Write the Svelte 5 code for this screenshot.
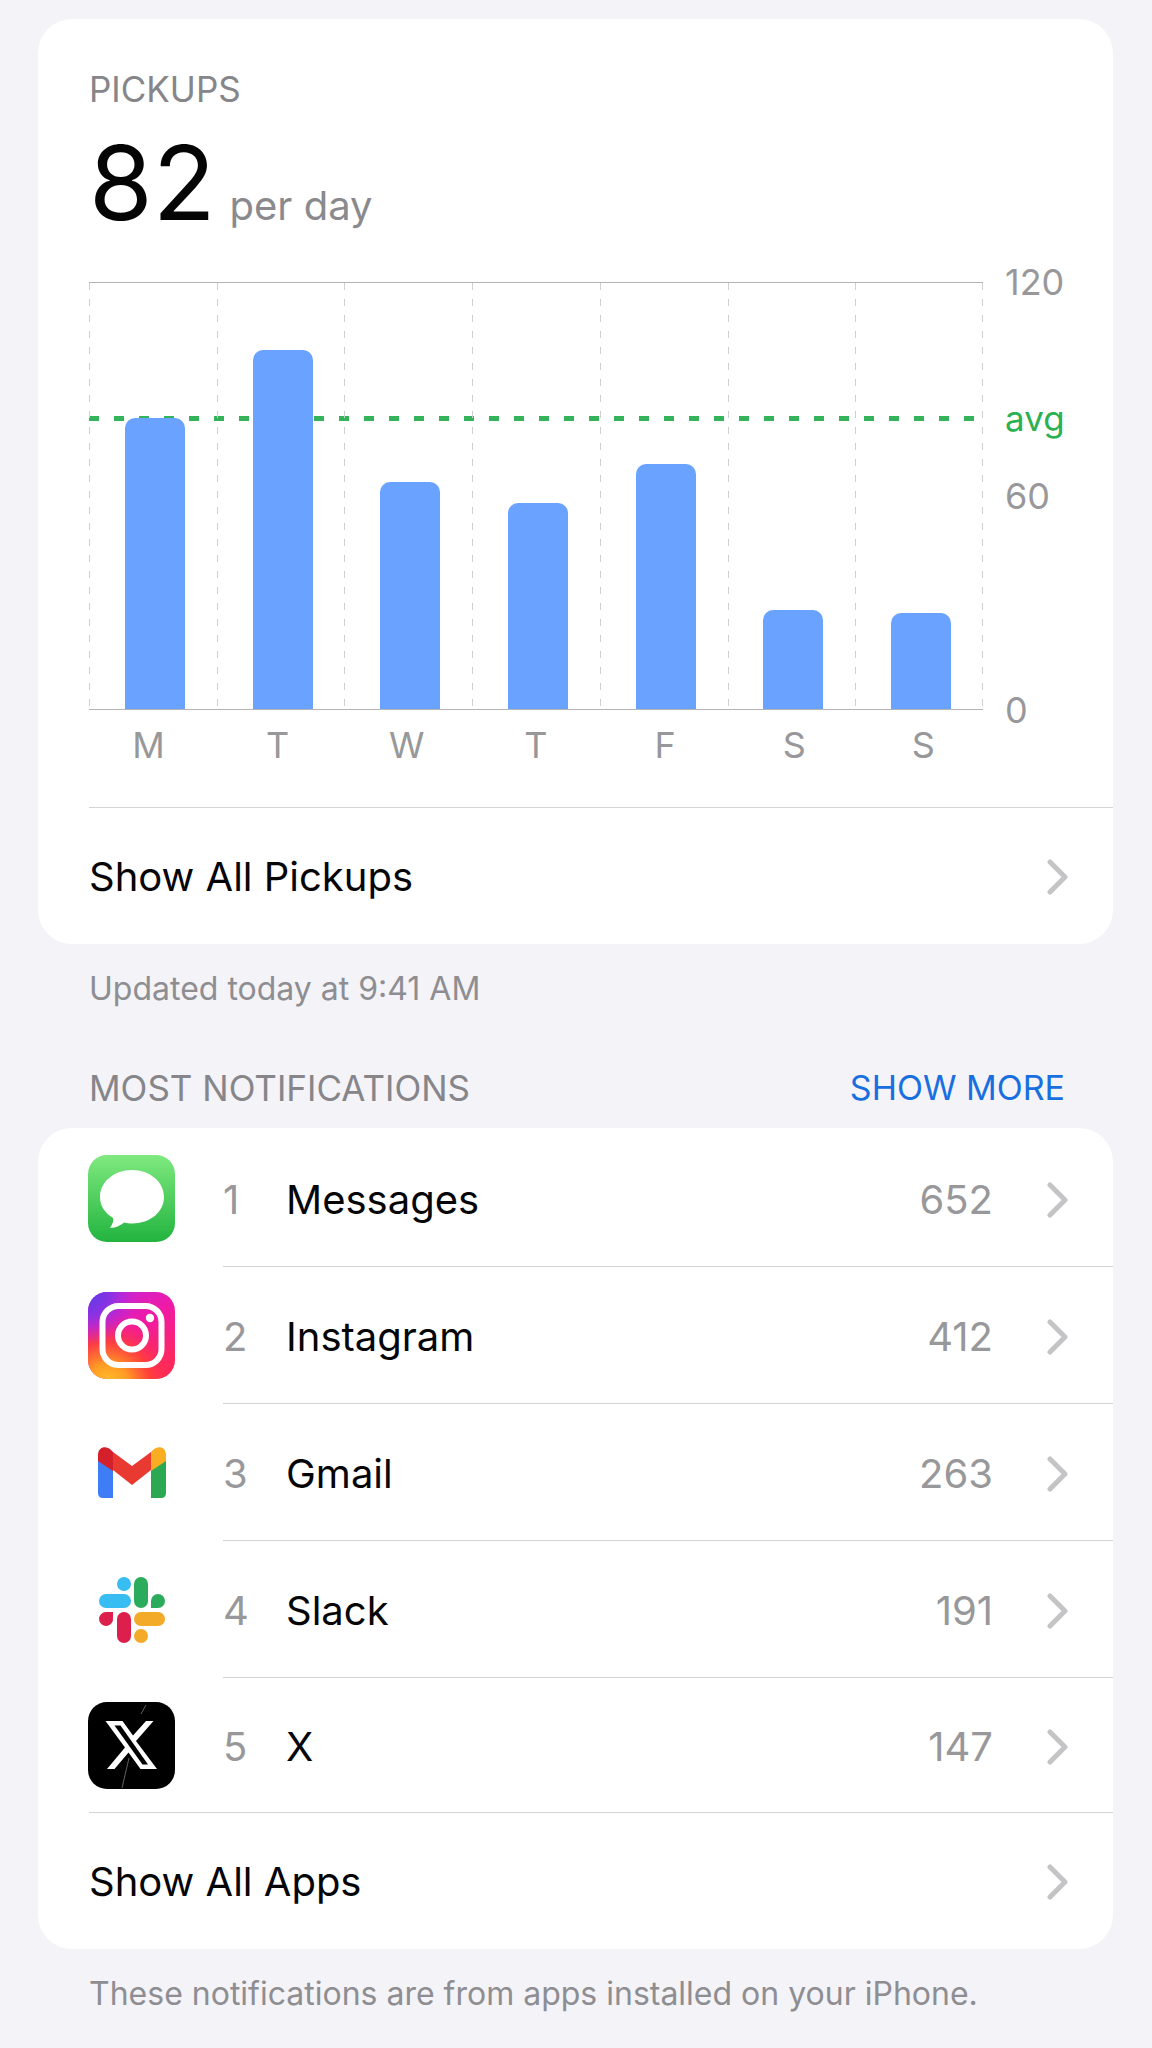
<script>
    const max = 120;
    const average = 82;

    let days = [
        {label: "M", pickups: 82},
        {label: "T", pickups: 101},
        {label: "W", pickups: 64},
        {label: "T", pickups: 58},
        {label: "F", pickups: 69},
        {label: "S", pickups: 28},
        {label: "S", pickups: 27},
    ];

    let ticks = [
        {label: "120", value: 120},
        {label: "avg", value: average, avg: true},
        {label: "60", value: 60},
        {label: "0", value: 0},
    ];

    let apps = [
        {name: "Messages", icon: "messages", count: 652},
        {name: "Instagram", icon: "instagram", count: 412},
        {name: "Gmail", icon: "gmail", count: 263},
        {name: "Slack", icon: "slack", count: 191},
        {name: "X", icon: "x", count: 147},
    ];

    function percent(value) {
        return (value / max) * 100 + "%";
    }
</script>

{#snippet chevron()}
    <svg class="chevron" viewBox="0 0 22 36" aria-hidden="true">
        <path d="M3 3 L18 18 L3 33" />
    </svg>
{/snippet}

{#snippet appIcon(name)}
    <svg class="icon" viewBox="0 0 87 87" aria-hidden="true">
        {#if name === "messages"}
            <defs>
                <linearGradient id="messagesBg" x1="0" y1="0" x2="0" y2="1">
                    <stop offset="0" stop-color="#7fe97f" />
                    <stop offset="1" stop-color="#22b43f" />
                </linearGradient>
            </defs>
            <rect width="87" height="87" rx="19" fill="url(#messagesBg)" />
            <path fill="#fff" d="M44 15 C26 15 12 27 12 42 C12 51 17 58 25 63 C26 66 24 70 22 73 C28 73 33 70 36 67.500 C39 68.300 41 68.500 44 68.500 C62 68.500 76 57 76 42 C76 27 62 15 44 15 Z" />
        {:else if name === "instagram"}
            <defs>
                <linearGradient id="instaBg" x1="0.200" y1="0" x2="0.800" y2="1">
                    <stop offset="0" stop-color="#c824d8" />
                    <stop offset="0.450" stop-color="#f01aa4" />
                    <stop offset="1" stop-color="#ff2a52" />
                </linearGradient>
                <radialGradient id="instaWarm" cx="0.220" cy="1.080" r="0.850">
                    <stop offset="0" stop-color="#ffc62c" />
                    <stop offset="0.300" stop-color="#ff9a24" />
                    <stop offset="0.600" stop-color="#ff4234" stop-opacity="0.850" />
                    <stop offset="1" stop-color="#ff1d70" stop-opacity="0" />
                </radialGradient>
                <radialGradient id="instaCool" cx="0" cy="0" r="0.600">
                    <stop offset="0" stop-color="#5a3ce6" />
                    <stop offset="0.450" stop-color="#8a32e2" />
                    <stop offset="1" stop-color="#c824d8" stop-opacity="0" />
                </radialGradient>
            </defs>
            <rect width="87" height="87" rx="19" fill="url(#instaBg)" />
            <rect width="87" height="87" rx="19" fill="url(#instaWarm)" />
            <rect width="87" height="87" rx="19" fill="url(#instaCool)" />
            <rect x="14.500" y="14" width="59" height="59" rx="16" fill="none" stroke="#fff" stroke-width="6" />
            <circle cx="44" cy="43.500" r="14" fill="none" stroke="#fff" stroke-width="6" />
            <circle cx="62" cy="26" r="4.200" fill="#fff" />
        {:else if name === "gmail"}
            <path fill="#3f7df6" d="M10 30 L25 41 V69 H15 Q10 69 10 64 Z" />
            <path fill="#2aa952" d="M78 30 L63 41 V69 H73 Q78 69 78 64 Z" />
            <path fill="#e83a30" d="M25 23 L44 37 L63 23 V41 L44 56 L25 41 Z" />
            <path fill="#d3202a" d="M10 32 V26 C10 18 18 16 23 21 L25 23 V42 Z" />
            <path fill="#f8ad22" d="M78 32 V26 C78 18 70 16 65 21 L63 23 V42 Z" />
        {:else if name === "slack"}
            <g fill="#38bdf2">
                <circle cx="36" cy="18" r="7" />
                <rect x="11" y="28" width="32" height="14" rx="7" />
            </g>
            <g fill="#2bab5c">
                <rect x="46" y="11" width="14" height="31" rx="7" />
                <path d="M63 42 V35 A7 7 0 1 1 70 42 Z" />
            </g>
            <g fill="#dc1f4d">
                <path d="M25 46 V52 A7 7 0 1 1 18 46 Z" />
                <rect x="29" y="46" width="14" height="31" rx="7" />
            </g>
            <g fill="#f3aa28">
                <rect x="46" y="46" width="31" height="14" rx="7" />
                <circle cx="53" cy="70" r="7" />
            </g>
        {:else}
            <rect width="87" height="87" rx="19" fill="#000" />
            <path stroke="#8a8a8a" stroke-width="0.700" d="M41 56 L34 86 M58 3 L53 12" />
            <path fill="#fff" d="M58 19 H65.500 L48 39 L69 67 H52.500 L40.500 50.500 L26.500 67 H19 L37 45.500 L17.500 19 H34.500 L45 33.500 Z" />
            <path fill="#000" d="M26.500 23.500 H32.500 L60 62.500 H54.500 Z" />
        {/if}
    </svg>
{/snippet}

<main>
    <section class="card">
        <div class="summary">
            <h2>PICKUPS</h2>
            <p class="total"><strong>{average}</strong> <span>per day</span></p>

            <div class="chart">
                <div class="plot">
                    <div class="avgLine" style="bottom: {percent(average)}"></div>
                    {#each days as day}
                        <div class="column">
                            <div class="bar" style="height: {percent(day.pickups)}"></div>
                        </div>
                    {/each}
                </div>
                <div class="axis">
                    {#each ticks as tick}
                        <span class:avg={tick.avg} style="bottom: {percent(tick.value)}">{tick.label}</span>
                    {/each}
                </div>
                <div class="days">
                    {#each days as day}
                        <span>{day.label}</span>
                    {/each}
                </div>
            </div>
        </div>
        <button class="showAll">Show All Pickups {@render chevron()}</button>
    </section>
    <p class="note">Updated today at 9:41 AM</p>

    <header>
        <h2>MOST NOTIFICATIONS</h2>
        <button class="more">SHOW MORE</button>
    </header>
    <section class="card">
        <ol>
            {#each apps as app, i}
                <li>
                    <button class="app">
                        {@render appIcon(app.icon)}
                        <span class="details">
                            <span class="rank">{i + 1}</span>
                            <span class="name">{app.name}</span>
                            <span class="count">{app.count}</span>
                            {@render chevron()}
                        </span>
                    </button>
                </li>
            {/each}
        </ol>
        <button class="showAll">Show All Apps {@render chevron()}</button>
    </section>
    <p class="note">These notifications are from apps installed on your iPhone.</p>
</main>

<style>
    :global(body) {
        background: #f4f3f8;
    }
    main {
        padding: 19px 39px 24px 38px;
        font-family: Inter, "Liberation Sans", sans-serif;
        color: #050506;
    }
    h2, p, ol {
        margin: 0;
        padding: 0;
    }
    button {
        border: 0;
        padding: 0;
        background: none;
        font: inherit;
        color: inherit;
        text-align: left;
        cursor: pointer;
    }
    h2 {
        font-size: 35px;
        line-height: 44px;
        font-weight: 400;
        color: #86868a;
    }
    .card {
        background: #fff;
        border-radius: 34px;
        overflow: hidden;
    }
    .summary {
        padding: 48px 48px 40px 51px;
    }
    .total {
        display: flex;
        align-items: baseline;
        gap: 14px;
        line-height: 128px;
        margin-top: 8px;
    }
    .total strong {
        font-size: 103px;
        font-weight: 400;
    }
    .total span {
        font-size: 40px;
        color: #8a8a8e;
    }
    .chart {
        display: grid;
        grid-template-columns: 1fr 60px;
        column-gap: 22px;
        margin-top: 12px;
        font-size: 36px;
        line-height: 44px;
        color: #98989b;
    }
    .plot {
        position: relative;
        display: flex;
        height: 426px;
        border-top: 1px solid #b4b4b6;
        border-bottom: 1px solid #b4b4b6;
        /* dashed rule on the right edge, the columns draw the others */
        background: repeating-linear-gradient(#cfcfd1 0 7px, transparent 7px 16px) right / 1px 100% no-repeat;
    }
    .avgLine {
        position: absolute;
        left: 0;
        right: 0;
        height: 5px;
        margin-bottom: -3px;
        background: repeating-linear-gradient(90deg, #35b35a 0 10px, transparent 10px 25px);
    }
    .column {
        position: relative;
        flex: 1;
        display: flex;
        align-items: flex-end;
        justify-content: center;
        padding-left: 4px;
        background: repeating-linear-gradient(#cfcfd1 0 7px, transparent 7px 16px) left / 1px 100% no-repeat;
    }
    .bar {
        width: 60px;
        background: #6aa3ff;
        border-radius: 10px 10px 0 0;
    }
    .axis {
        position: relative;
    }
    .axis span {
        position: absolute;
        left: 0;
        transform: translateY(50%);
    }
    .axis .avg {
        font-size: 35px;
        color: #2bb052;
    }
    .days {
        display: flex;
        margin: 13px -5px 0;
    }
    .days span {
        flex: 1;
        text-align: center;
    }
    .showAll {
        display: flex;
        align-items: center;
        justify-content: space-between;
        width: calc(100% - 51px);
        height: 137px;
        margin-left: 51px;
        padding: 2px 44px 0 0;
        border-top: 1px solid #d4d4d6;
        font-size: 40px;
        line-height: 52px;
    }
    .chevron {
        flex: none;
        width: 22px;
        height: 36px;
        fill: none;
        stroke: #c4c4c6;
        stroke-width: 5;
        stroke-linecap: round;
        stroke-linejoin: round;
    }
    .note {
        margin: 23px 51px 0;
        font-size: 32px;
        line-height: 44px;
        color: #8e8e92;
    }
    header {
        display: flex;
        justify-content: space-between;
        padding: 55px 48px 18px 51px;
    }
    .more {
        font-size: 34px;
        line-height: 44px;
        color: #1a6fe0;
    }
    ol {
        list-style: none;
        padding-top: 2px;
    }
    .app {
        display: flex;
        align-items: center;
        width: 100%;
        padding-left: 50px;
        font-size: 40px;
        line-height: 52px;
    }
    .icon {
        flex: none;
        width: 87px;
        height: 87px;
    }
    .details {
        flex: 1;
        display: flex;
        align-items: center;
        box-sizing: border-box;
        height: 137px;
        margin-left: 48px;
        padding: 4px 44px 0 0;
        border-bottom: 1px solid #d4d4d6;
    }
    li:last-child .details {
        height: 134px;
        border-bottom: 0;
    }
    .rank {
        width: 63px;
        color: #98989b;
    }
    .name {
        flex: 1;
    }
    .count {
        margin-right: 54px;
        color: #98989b;
    }
</style>
